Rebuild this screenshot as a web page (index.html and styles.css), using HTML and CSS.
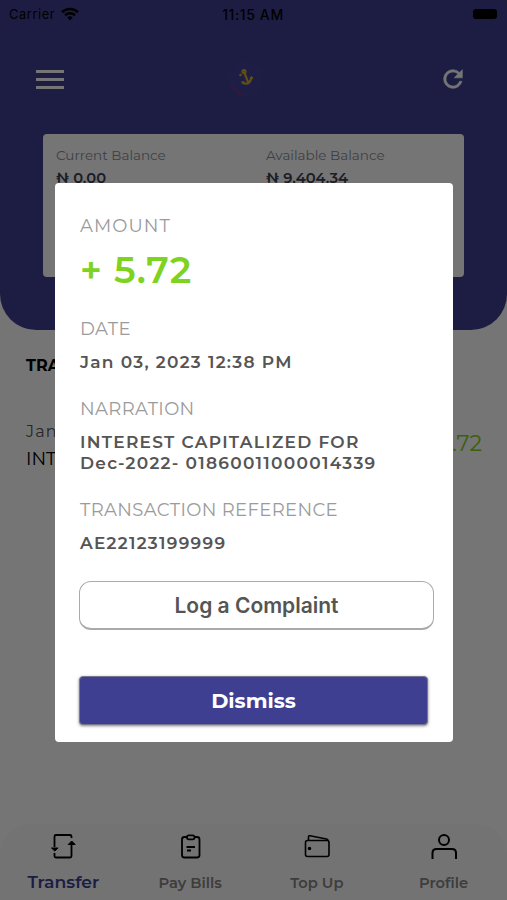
FILE: index.html
```html
<!DOCTYPE html>
<html lang="en">
<head>
  <meta charset="UTF-8">
  <title>Transactions</title>
  <link rel="stylesheet" href="styles.css">
</head>
<body>

  <div class="app">
    <header class="header">
      <div class="status-bar">
        <div class="carrier">
          <span>Carrier</span>
          <svg width="18" height="14" viewBox="0 0 18 14" fill="none" stroke="#000" stroke-width="2.6">
            <path d="M1 5.2a11.5 11.5 0 0 1 16 0M4 8.3a7.2 7.2 0 0 1 10 0"/>
            <path d="M9 13.4L6.2 10.5a4 4 0 0 1 5.6 0z" fill="#000" stroke="none"/>
          </svg>
        </div>
        <span class="time">11:15 AM</span>
        <div class="battery"></div>
      </div>

      <div class="toolbar">
        <div class="menu"><i></i><i></i><i></i></div>
        <svg class="logo" width="38" height="38" viewBox="0 0 38 38" fill="none">
          <circle cx="19" cy="19" r="17" fill="#434196" stroke="#4b3d90"/>
          <path d="M5 25a17 17 0 0 0 13 11" stroke="#8a2d78" stroke-width="1.2"/>
          <g stroke="#d1ab2c" stroke-width="2.200">
            <circle cx="17" cy="11.500" r="1.500"/>
            <path d="M17.500 13l3.500 9M14 14l-1 2M15 22.500q4 2 6.500.5q3-2 2.500-6M14.500 22l3 .5M24 16.500l1.500 2.500"/>
          </g>
        </svg>
        <svg class="refresh" width="28" height="28" viewBox="0 0 24 24" fill="#fff">
          <path d="M17.650 6.350A7.950 7.950 0 0 0 12 4a8 8 0 1 0 7.730 10h-2.080A6 6 0 1 1 12 6c1.660 0 3.140.69 4.220 1.780L13 11h7V4z" stroke="#fff" stroke-width=".5"/>
        </svg>
      </div>

      <div class="balance-card">
        <div class="balance">
          <span class="balance-label">Current Balance</span>
          <span class="balance-value">₦ 0.00</span>
        </div>
        <div class="balance">
          <span class="balance-label">Available Balance</span>
          <span class="balance-value">₦ 9,404.34</span>
        </div>
      </div>
    </header>

    <main class="content">
      <h2>TRANSACTIONS</h2>
      <div class="transaction">
        <div>
          <div class="transaction-date">Jan 03, 2023</div>
          <div class="transaction-name">INTEREST CAPITALIZED</div>
        </div>
        <div class="transaction-amount">+ 5.72</div>
      </div>
    </main>

    <nav class="tabs">
      <a class="tab active">
        <svg width="28" height="28" viewBox="0 0 28 28" fill="none" stroke="#000" stroke-width="1.800">
          <path d="M5.500 15V4.500a1.500 1.500 0 0 1 1.500-1.500H21a1.500 1.500 0 0 1 1.500 1.500V6M5.500 21v3a1.500 1.500 0 0 0 1.500 1.500h14a1.500 1.500 0 0 0 1.500-1.500V12"/>
          <path d="M2.500 16h6.600L5.800 19zM19.200 12.500h7L22.700 9z" fill="#000" stroke-width="1"/>
        </svg>
        <span>Transfer</span>
      </a>
      <a class="tab">
        <svg width="28" height="28" viewBox="0 0 28 28" fill="none" stroke="#000" stroke-width="1.800">
          <rect x="6" y="5" width="17.500" height="20.500" rx="2.500"/>
          <rect x="11" y="3.300" width="7.500" height="4" rx="1.800" fill="#fafafa"/>
          <path d="M10.500 15h8.500M11 18.500h4"/>
        </svg>
        <span>Pay Bills</span>
      </a>
      <a class="tab">
        <svg width="28" height="28" viewBox="0 0 28 28" fill="none" stroke="#000" stroke-width="1.600">
          <rect x="2.500" y="8.500" width="23.500" height="16" rx="2"/>
          <path d="M5.500 8.500V5q0-1.500 1.500-1.200L23.500 7q1.500.3 1.500 1.700"/>
          <circle cx="6.500" cy="16.500" r="1" fill="#000"/>
        </svg>
        <span>Top Up</span>
      </a>
      <a class="tab">
        <svg width="28" height="28" viewBox="0 0 28 28" fill="none" stroke="#000" stroke-width="2">
          <circle cx="14" cy="8" r="5"/>
          <path d="M2.500 27v-6q0-4 4-4h15.500q4 0 4 4v6"/>
        </svg>
        <span>Profile</span>
      </a>
    </nav>
  </div>

  <!-- transaction details -->
  <div class="overlay">
    <div class="modal">
      <div class="label wide">AMOUNT</div>
      <div class="amount">+ 5.72</div>
      <div class="label">DATE</div>
      <div class="value">Jan 03, 2023 12:38 PM</div>
      <div class="label">NARRATION</div>
      <div class="value">INTEREST CAPITALIZED FOR<br>Dec-2022- 01860011000014339</div>
      <div class="label">TRANSACTION REFERENCE</div>
      <div class="value">AE22123199999</div>
      <button class="complaint">Log a Complaint</button>
      <button class="dismiss">Dismiss</button>
    </div>
  </div>

</body>
</html>
```
FILE: styles.css
```css
* {
  box-sizing: border-box;
}

body {
  margin: 0;
  font-family: Montserrat, Inter, sans-serif;
  background-color: #fff;
}

.app {
  display: flex;
  flex-direction: column;
  height: 900px;
  overflow: hidden;
}

.header {
  height: 330px;
  background-color: #414094;
  border-radius: 0 0 36px 36px;
}

.status-bar {
  display: grid;
  grid-template-columns: 1fr auto 1fr;
  align-items: center;
  height: 28px;
  padding: 0 10px 0 9px;
  font-family: Inter, sans-serif;
  font-size: 13px;
}

.carrier {
  display: flex;
  align-items: center;
  gap: 6px;
  letter-spacing: 0.5px;
}

.time {
  font-size: 14px;
  font-weight: 500;
  letter-spacing: 0.6px;
}

.battery {
  justify-self: end;
  width: 24px;
  height: 10px;
  border-radius: 3px;
  background-color: #000;
}

.toolbar {
  display: grid;
  grid-template-columns: 1fr auto 1fr;
  align-items: center;
  height: 102px;
  padding: 0 40px 0 36px;
}

.menu {
  display: flex;
  flex-direction: column;
  gap: 5px;
  width: 28px;
}

.menu i {
  height: 3px;
  background-color: #fff;
}

.logo {
  margin-right: 12px;
}

.refresh {
  justify-self: end;
}

.balance-card {
  display: grid;
  grid-template-columns: 210px 1fr;
  height: 143px;
  margin: 4px 43px 0;
  padding: 11px 0 0 13px;
  border-radius: 4px;
  background-color: #fff;
}

.balance {
  display: flex;
  flex-direction: column;
  gap: 3px;
}

.balance-label {
  font-size: 13.5px;
  line-height: 20px;
  color: #8a8d99;
}

.balance-value {
  font-size: 14.7px;
  font-weight: 600;
  line-height: 20px;
  color: #3c4150;
}

.content {
  flex: 1;
  padding: 25px 25px 0 26px;
}

h2 {
  margin: 0;
  font-size: 16px;
  font-weight: 700;
  line-height: 22px;
}

.transaction {
  display: flex;
  align-items: center;
  justify-content: space-between;
  margin-top: 41px;
}

.transaction-date {
  font-size: 16px;
  line-height: 27px;
  letter-spacing: 1.2px;
  color: #555;
}

.transaction-name {
  font-size: 18px;
  line-height: 29px;
}

.transaction-amount {
  padding-bottom: 6px;
  font-size: 22px;
  color: #7ed321;
}

.tabs {
  display: grid;
  grid-template-columns: repeat(4, 1fr);
  height: 76px;
  border-radius: 30px 30px 0 0;
  background-color: #fafafa;
}

.tab {
  display: flex;
  flex-direction: column;
  align-items: center;
  padding-top: 8px;
  font-size: 14.7px;
  font-weight: 600;
  color: #858585;
}

.tab span {
  line-height: 20px;
  margin-top: 13px;
}

.tab.active {
  font-size: 17.2px;
  color: #414094;
}

.tab.active span {
  margin-top: 12px;
}

.overlay {
  position: absolute;
  top: 0;
  left: 0;
  width: 507px;
  height: 900px;
  padding: 183px 54px 0 55px;
  background-color: rgba(0, 0, 0, 0.54);
}

.modal {
  height: 559px;
  padding: 31px 19px 17px 25px;
  border-radius: 4px;
  background-color: #fff;
  white-space: nowrap;
}

.label {
  font-size: 18px;
  font-weight: 400;
  line-height: 24px;
  letter-spacing: 0.36px;
  color: #9b9b9b;
}

.label.wide {
  letter-spacing: 1.1px;
}

.amount {
  margin: 11px 0 26px;
  font-size: 37px;
  font-weight: 600;
  line-height: 42px;
  letter-spacing: 1px;
  color: #7ed321;
}

.value {
  margin: 11px 0 24px;
  font-size: 17px;
  font-weight: 600;
  line-height: 21px;
  letter-spacing: 1.27px;
  color: #555;
}

button {
  display: block;
  height: 49px;
  margin-left: -1px;
  padding: 0;
  font-family: inherit;
  font-size: 21px;
}

.complaint {
  width: 355px;
  margin-top: 27px;
  border: 1px solid #aaa;
  border-bottom-width: 2px;
  border-radius: 12px;
  background-color: #fff;
  font-family: Inter, sans-serif;
  font-weight: 600;
  color: #555;
}

.dismiss {
  width: 349px;
  margin-top: 46px;
  border: 1px solid #77778f;
  border-radius: 4px;
  background-color: #3f3f92;
  box-shadow: 0 1px 3px rgba(0, 0, 0, 0.5);
  font-size: 20.8px;
  font-weight: 700;
  color: #fff;
}
```
